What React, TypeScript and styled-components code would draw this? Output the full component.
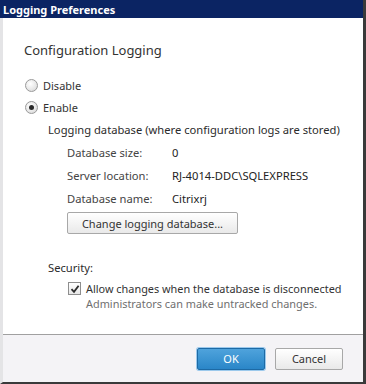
import React, { useState } from 'react';
import styled, { createGlobalStyle } from 'styled-components';

const GlobalStyle = createGlobalStyle`
  html, body {
    margin: 0;
    padding: 0;
    background: #ffffff;
  }
  body {
    font-family: "Noto Sans", "Open Sans", sans-serif;
  }
`;

// 창 전체 프레임
const Window = styled.div`
  width: 366px;
  height: 384px;
  box-sizing: border-box;
  display: flex;
  flex-direction: column;
  background: #ffffff;
  border-left: 3px solid #e4e4e6;
  border-right: 3px solid #3a3a3a;
  border-bottom: 2px solid #3a3a3a;
`;

const TitleBar = styled.div`
  height: 18px;
  margin-left: -3px;
  padding-left: 3px;
  display: flex;
  align-items: center;
  background: #0b2463;
  color: #ffffff;
  font-size: 11px;
  font-weight: 700;
`;

const Body = styled.div`
  flex: 1;
  padding: 23px 0 0 21px;
  display: flex;
  flex-direction: column;
  color: #2b2b2b;
`;

const Heading = styled.div`
  font-size: 13px;
  line-height: 18px;
  color: #333333;
  margin-bottom: 15px;
`;

const OptionRow = styled.label`
  display: flex;
  align-items: center;
  gap: 5px;
  height: 22px;
  font-size: 11px;
  color: #333333;
  margin-left: 1px;
`;

const RadioCircle = styled.span<{ $checked: boolean }>`
  width: 11px;
  height: 11px;
  border-radius: 50%;
  border: 1px solid #9a9a9a;
  background: radial-gradient(circle at 40% 35%, #ffffff 0%, #e6e6e6 60%, #cfcfcf 100%);
  display: flex;
  align-items: center;
  justify-content: center;
  &::after {
    content: '';
    width: 5px;
    height: 5px;
    border-radius: 50%;
    background: ${(p) => (p.$checked ? '#2a2a2a' : 'transparent')};
  }
`;

const Section = styled.div`
  margin-left: 24px;
  display: flex;
  flex-direction: column;
`;

const SectionTitle = styled.div`
  font-size: 11.2px;
  line-height: 23px;
  height: 23px;
  color: #2b2b2b;
`;

const InfoGrid = styled.div`
  margin-left: 19px;
  display: grid;
  grid-template-columns: 105px auto;
  grid-auto-rows: 23px;
  align-items: center;
  font-size: 11.2px;
  line-height: 23px;
`;

const InfoLabel = styled.span`
  color: #444444;
`;

const InfoValue = styled.span`
  color: #222222;
`;

const Button = styled.button<{ $primary?: boolean }>`
  height: 22px;
  padding: 0 8px;
  font-family: inherit;
  font-size: 11px;
  color: ${(p) => (p.$primary ? '#ffffff' : '#333333')};
  border-radius: 2px;
  border: 1px solid ${(p) => (p.$primary ? '#1d6aa5' : '#a8a8a8')};
  background: ${(p) =>
    p.$primary
      ? 'linear-gradient(#4fa3dc, #2a86c8)'
      : 'linear-gradient(#ffffff, #e9e9e9)'};
  box-shadow: ${(p) => (p.$primary ? '0 0 0 1px #9cc9ec' : 'none')};
  cursor: default;
`;

const ChangeButton = styled(Button)`
  margin: 2px 0 0 19px;
  width: 171px;
  align-self: flex-start;
`;

const SecurityBlock = styled.div`
  margin-left: 24px;
  margin-top: 22px;
  display: flex;
  flex-direction: column;
`;

const CheckRow = styled.div`
  display: flex;
  align-items: flex-start;
  gap: 5px;
  margin-left: 20px;
  margin-top: 2px;
`;

const CheckBox = styled.span`
  width: 11px;
  height: 11px;
  margin-top: 1px;
  border: 1px solid #8e8e8e;
  background: linear-gradient(#ffffff, #e8e8e8);
  display: flex;
  align-items: center;
  justify-content: center;
  flex-shrink: 0;
`;

const CheckText = styled.div`
  display: flex;
  flex-direction: column;
  font-size: 10.9px;
  line-height: 15px;
  color: #333333;
`;

const Hint = styled.span`
  color: #6f6f6f;
`;

const Footer = styled.div`
  height: 48px;
  box-sizing: border-box;
  border-top: 1px solid #a0a0a0;
  background: #f4f3f6;
  display: flex;
  align-items: center;
  justify-content: flex-end;
  gap: 10px;
  padding-right: 20px;
`;

const DialogButton = styled(Button)`
  width: 68px;
`;

export default function App() {
  const [enabled, setEnabled] = useState(true);

  return (
    <>
      <GlobalStyle />
      <Window>
        <TitleBar>Logging Preferences</TitleBar>
        <Body>
          <Heading>Configuration Logging</Heading>
          <OptionRow onClick={() => setEnabled(false)}>
            <RadioCircle $checked={!enabled} />
            Disable
          </OptionRow>
          <OptionRow onClick={() => setEnabled(true)}>
            <RadioCircle $checked={enabled} />
            Enable
          </OptionRow>
          <Section>
            <SectionTitle>Logging database (where configuration logs are stored)</SectionTitle>
            <InfoGrid>
              <InfoLabel>Database size:</InfoLabel>
              <InfoValue>0</InfoValue>
              <InfoLabel>Server location:</InfoLabel>
              <InfoValue>RJ-4014-DDC\SQLEXPRESS</InfoValue>
              <InfoLabel>Database name:</InfoLabel>
              <InfoValue>Citrixrj</InfoValue>
            </InfoGrid>
            <ChangeButton>Change logging database...</ChangeButton>
          </Section>
          <SecurityBlock>
            <SectionTitle>Security:</SectionTitle>
            <CheckRow>
              <CheckBox>
                <svg width="10" height="10" viewBox="0 0 10 10">
                  <path d="M1.5 5.2 L4 7.8 L8.6 1.8" fill="none" stroke="#2b2b2b" strokeWidth="1.8" />
                </svg>
              </CheckBox>
              <CheckText>
                <span>Allow changes when the database is disconnected</span>
                <Hint>Administrators can make untracked changes.</Hint>
              </CheckText>
            </CheckRow>
          </SecurityBlock>
        </Body>
        <Footer>
          <DialogButton $primary>OK</DialogButton>
          <DialogButton>Cancel</DialogButton>
        </Footer>
      </Window>
    </>
  );
}
